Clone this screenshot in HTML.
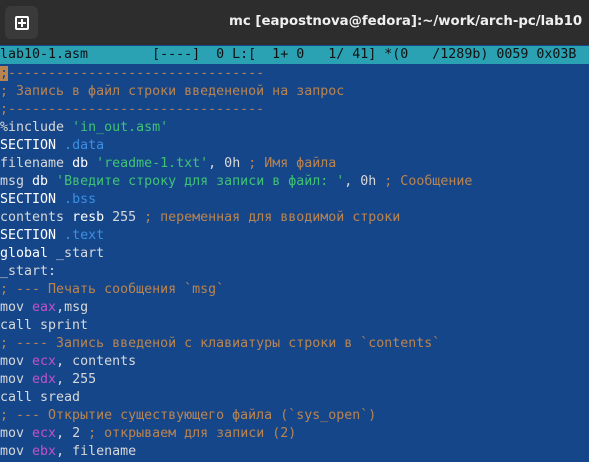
<!DOCTYPE html>
<html><head><meta charset="utf-8"><style>
html,body{margin:0;padding:0;width:589px;height:462px;overflow:hidden;background:#16468a}
#tb{position:absolute;left:0;top:0;width:589px;height:45px;background:#2d2d2d}
#btn{position:absolute;left:5px;top:6px;width:33px;height:33px;background:#3a3a3a;border-radius:6px}
#btn div{position:absolute;left:10px;top:10px;width:10px;height:10px;border:2px solid #fff;border-radius:2px}
#btn div:before{content:"";position:absolute;left:4px;top:1px;width:2px;height:8px;background:#fff}
#btn div:after{content:"";position:absolute;left:1px;top:4px;width:8px;height:2px;background:#fff}
#title{position:absolute;left:229px;top:14px;font:bold 13.3px "DejaVu Sans","Liberation Sans",sans-serif;color:#f0f0f0;white-space:nowrap}
#st{position:absolute;left:0;top:46px;width:589px;height:18px;background:#2aa2b4;color:#111;font:13.3px/18px "DejaVu Sans Mono","Liberation Mono",monospace;white-space:pre}
#ed{position:absolute;left:0;top:65px;font:13.3px/18px "DejaVu Sans Mono","Noto Sans CJK SC",monospace;white-space:pre;color:#d8d8d8}
.c{color:#b98450}.s{color:#3fc276}.k{color:#3c8fe0}.r{color:#c052c8}.w{color:#fff}
.cur{background:#b98450;color:#16468a}
</style></head><body>
<div id="tb"><div id="btn"><div></div></div><div id="title">mc [eapostnova@fedora]:~/work/arch-pc/lab10</div></div>
<div id="st">lab10-1.asm        [----]  0 L:[  1+ 0   1/ 41] *(0   /1289b) 0059 0x03B</div>
<div id="ed"><span class="cur">;</span><span class="c">--------------------------------</span>
<span class="c">; Запись в файл строки введененой на запрос</span>
<span class="c">;--------------------------------</span>
%include <span class="s">'in_out.asm'</span>
<span class="w">SECTION</span> <span class="k">.data</span>
filename <span class="w">db</span> <span class="s">'readme-1.txt'</span>, 0h <span class="c">; Имя файла</span>
msg <span class="w">db</span> <span class="s">'Введите строку для записи в файл: '</span>, 0h <span class="c">; Сообщение</span>
<span class="w">SECTION</span> <span class="k">.bss</span>
contents <span class="w">resb</span> 255 <span class="c">; переменная для вводимой строки</span>
<span class="w">SECTION</span> <span class="k">.text</span>
<span class="w">global</span> _start
_start:
<span class="c">; --- Печать сообщения `msg`</span>
mov <span class="r">eax</span>,msg
call sprint
<span class="c">; ---- Запись введеной с клавиатуры строки в `contents`</span>
mov <span class="r">ecx</span>, contents
mov <span class="r">edx</span>, 255
call sread
<span class="c">; --- Открытие существующего файла (`sys_open`)</span>
mov <span class="r">ecx</span>, 2 <span class="c">; открываем для записи (2)</span>
mov <span class="r">ebx</span>, filename</div>
</body></html>
